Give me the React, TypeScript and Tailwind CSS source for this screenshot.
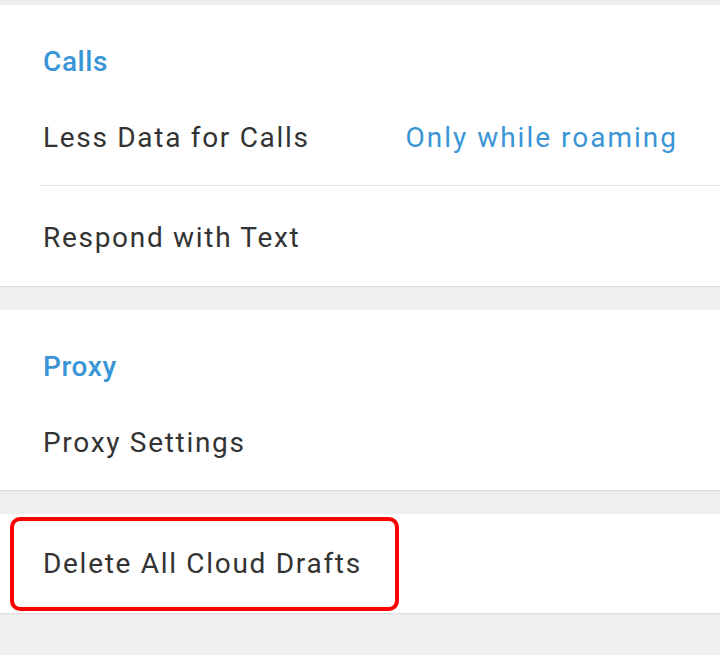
import React from "react";

const font = { fontFamily: "Roboto, 'Noto Sans', sans-serif" };

export default function App() {
  return (
    <div
      className="w-[720px] h-[655px] bg-[#efefef] overflow-hidden flex flex-col pt-[5px] antialiased"
      style={font}
    >
      <section className="bg-white flex flex-col shadow-[0_1px_1px_rgba(0,0,0,0.07)]">
        <div className="h-[85px] flex items-end pl-[43px] pb-[11px]">
          <span className="text-[28px] leading-[34px] font-medium tracking-[0.6px] text-[#3a95d6]">Calls</span>
        </div>
        <div className="h-[95px] flex items-center justify-between pl-[43px] pr-[42px]">
          <span className="text-[28px] leading-[34px] tracking-[1.7px] text-[#333333]">Less Data for Calls</span>
          <span className="text-[28px] leading-[34px] tracking-[2px] text-[#3a95d6]">Only while roaming</span>
        </div>
        <div className="ml-[40px] h-px bg-[#e4e4e4]" />
        <div className="h-[100px] flex items-center pl-[43px] pt-[3px]">
          <span className="text-[28px] leading-[34px] tracking-[1.7px] text-[#333333]">Respond with Text</span>
        </div>
      </section>

      <section className="mt-[24px] bg-white flex flex-col shadow-[0_1px_1px_rgba(0,0,0,0.07)]">
        <div className="h-[85px] flex items-end pl-[43px] pb-[11px]">
          <span className="text-[28px] leading-[34px] font-medium tracking-[0.6px] text-[#3a95d6]">Proxy</span>
        </div>
        <div className="h-[95px] flex items-center pl-[43px]">
          <span className="text-[28px] leading-[34px] tracking-[1.7px] text-[#333333]">Proxy Settings</span>
        </div>
      </section>

      <section className="relative mt-[24px] bg-white h-[99px] flex items-center pl-[43px] shadow-[0_1px_1px_rgba(0,0,0,0.07)]">
        <span className="text-[28px] leading-[34px] tracking-[1.7px] text-[#333333]">Delete All Cloud Drafts</span>
        <div className="absolute left-[10px] top-[3px] w-[389px] h-[94px] border-[4px] border-[#ff0000] rounded-[10px]" />
      </section>
    </div>
  );
}
